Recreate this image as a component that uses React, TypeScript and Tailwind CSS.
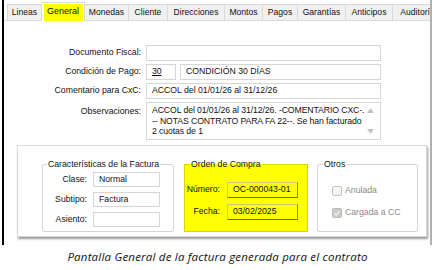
const tabs: { t: string; cls: string; sel?: boolean }[] = [
  { t: "Lineas", cls: "w-[35px] border-l" },
  { t: "General", cls: "w-[43px]", sel: true },
  { t: "Monedas", cls: "w-[44px]" },
  { t: "Cliente", cls: "w-[39px]" },
  { t: "Direcciones", cls: "w-[57px]" },
  { t: "Montos", cls: "w-[38px]" },
  { t: "Pagos", cls: "w-[35px]" },
  { t: "Garantías", cls: "w-[48px]" },
  { t: "Anticipos", cls: "w-[47px]" },
  { t: "Auditoría", cls: "w-[50px]" },
];

function Input({ text, cls }: { text?: string; cls: string }) {
  return (
    <div className={`border border-[#d6d6d6] bg-white flex items-center pl-[5px] whitespace-nowrap overflow-hidden ${cls}`}>
      {text}
    </div>
  );
}

function YInput({ text }: { text: string }) {
  return (
    <div className="w-[71px] h-[16px] border border-[#c9c97a] border-b-[#6b6b3a] border-r-[#8a8a4a] flex items-center pl-[5px] whitespace-nowrap">
      {text}
    </div>
  );
}

export default function App() {
  return (
    <div className="w-[435px] h-[270px] bg-white flex flex-col text-[8.7px] text-[#111] font-['Liberation_Sans',Arial,sans-serif] overflow-hidden">
      <div className="ml-[2px] w-[430px] h-[245px] border-l-2 border-l-black border-r-2 border-r-[#b0b0b0] flex flex-col overflow-hidden">
        {/* tab bar */}
        <div className="h-[21px] pt-[4px] pl-[3px] flex items-end border-b border-[#d9d9d9] bg-white shrink-0">
          {tabs.map((tb) =>
            tb.sel ? (
              <div
                key={tb.t}
                className={`${tb.cls} h-[19px] -mb-[1px] bg-white border-t border-r border-[#d9d9d9] flex items-center justify-center shrink-0`}
              >
                <span className="w-[39px] h-[17px] bg-[#ffff00] flex items-center justify-center text-[9px]">{tb.t}</span>
              </div>
            ) : (
              <div
                key={tb.t}
                className={`${tb.cls} h-[16px] bg-[#f0f0f0] border-t border-r border-[#d9d9d9] flex items-center justify-center text-[8.6px] shrink-0 whitespace-nowrap overflow-hidden`}
              >
                {tb.t}
              </div>
            )
          )}
        </div>

        {/* form */}
        <div className="mt-[24px] flex flex-col gap-[3px]">
          <div className="flex items-center h-[16px]">
            <span className="w-[137px] text-right">Documento Fiscal:</span>
            <Input cls="ml-[5px] w-[235px] h-[16px]" />
          </div>
          <div className="flex items-center h-[16px]">
            <span className="w-[137px] text-right">Condición de Pago:</span>
            <Input cls="ml-[5px] w-[30px] h-[16px] underline" text="30" />
            <Input cls="ml-[4px] w-[201px] h-[16px]" text="CONDICIÓN 30 DÍAS" />
          </div>
          <div className="flex items-center h-[16px]">
            <span className="w-[137px] text-right">Comentario para CxC:</span>
            <Input cls="ml-[5px] w-[235px] h-[16px]" text="ACCOL del 01/01/26 al 31/12/26" />
          </div>
          <div className="flex items-start h-[38px]">
            <span className="w-[137px] text-right pt-[3px]">Observaciones:</span>
            <div className="ml-[5px] w-[235px] h-[38px] border border-[#d6d6d6] bg-white flex">
              <div className="flex-1 pl-[5px] pt-[2px] leading-[10.5px] overflow-hidden whitespace-nowrap tracking-[-0.1px]">
                ACCOL del 01/01/26 al 31/12/26. -COMENTARIO CXC-.
                <br />-- NOTAS CONTRATO PARA FA 22--. Se han facturado
                <br />2 cuotas de 1
              </div>
              <div className="w-[16px] flex flex-col items-center justify-between py-[5px] pr-[3px] shrink-0">
                <svg width="7" height="5" viewBox="0 0 7 5">
                  <path d="M0 5 L3.5 0 L7 5 Z" fill="#c4c4c4" />
                </svg>
                <svg width="7" height="5" viewBox="0 0 7 5">
                  <path d="M0 0 L3.5 5 L7 0 Z" fill="#c4c4c4" />
                </svg>
              </div>
            </div>
          </div>
        </div>

        {/* bottom panel */}
        <div className="mt-[5px] ml-[13px] w-[410px] h-[92px] border border-[#d8d8d8] bg-white shadow-[1px_2px_2px_rgba(0,0,0,0.4)] flex pl-[24px] pt-[13px] shrink-0">
          <fieldset className="w-[132px] h-[73px] border border-[#d5d5d5] rounded-[2px]">
            <legend className="ml-[4px] px-[1px] leading-[10px]">Características de la Factura</legend>
            <div className="flex flex-col gap-[5px] pt-[3px]">
              <div className="flex items-center h-[15px]">
                <span className="w-[44px] text-right">Clase:</span>
                <Input cls="ml-[6px] w-[67px] h-[15px]" text="Normal" />
              </div>
              <div className="flex items-center h-[15px]">
                <span className="w-[44px] text-right">Subtipo:</span>
                <Input cls="ml-[6px] w-[67px] h-[15px]" text="Factura" />
              </div>
              <div className="flex items-center h-[15px]">
                <span className="w-[44px] text-right">Asiento:</span>
                <Input cls="ml-[6px] w-[67px] h-[15px]" />
              </div>
            </div>
          </fieldset>

          <fieldset className="ml-[10px] w-[124px] h-[73px] border border-[#d6d600] bg-[#ffff00]">
            <legend className="ml-[5px] px-[1px] leading-[10px]">Orden de Compra</legend>
            <div className="flex flex-col gap-[6px] pt-[13px]">
              <div className="flex items-center h-[16px]">
                <span className="w-[35px] text-right">Número:</span>
                <div className="ml-[7px]">
                  <YInput text="OC-000043-01" />
                </div>
              </div>
              <div className="flex items-center h-[16px]">
                <span className="w-[35px] text-right">Fecha:</span>
                <div className="ml-[7px]">
                  <YInput text="03/02/2025" />
                </div>
              </div>
            </div>
          </fieldset>

          <fieldset className="ml-[9px] w-[101px] h-[73px] border border-[#d5d5d5] rounded-[2px]">
            <legend className="ml-[5px] px-[1px] leading-[10px]">Otros</legend>
            <div className="flex flex-col gap-[12px] pt-[17px] pl-[14px] text-[#8a8a8a]">
              <div className="flex items-center h-[10px] gap-[3px]">
                <div className="w-[10px] h-[10px] border border-[#c4c4c4] bg-[#f6f6f6] rounded-[2px]" />
                <span>Anulada</span>
              </div>
              <div className="flex items-center h-[10px] gap-[3px]">
                <div className="w-[10px] h-[10px] border border-[#b9b9b9] bg-[#cbcbcb] rounded-[2px] flex items-center justify-center">
                  <svg width="8" height="8" viewBox="0 0 8 8">
                    <path d="M1.5 4.2 L3.3 6 L6.7 2" stroke="#ededed" strokeWidth="1.3" fill="none" />
                  </svg>
                </div>
                <span>Cargada a CC</span>
              </div>
            </div>
          </fieldset>
        </div>
      </div>

      <div className="mt-[5px] text-center italic text-[11.5px] tracking-[0.2px] leading-[13px] text-[#111] font-['Open_Sans',sans-serif]">
        Pantalla General de la factura generada para el contrato
      </div>
    </div>
  );
}
